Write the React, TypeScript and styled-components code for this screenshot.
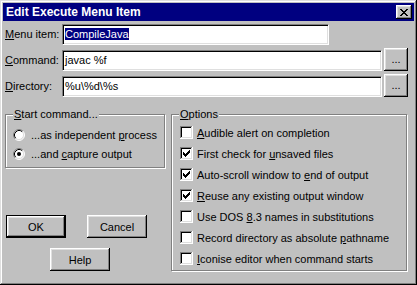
import styled, { createGlobalStyle } from "styled-components";

const GlobalStyle = createGlobalStyle`
  html, body {
    margin: 0;
    padding: 0;
    background: #c0c0c0;
  }

  body {
    font-family: "Liberation Sans", Arial, sans-serif;
    font-size: 11px;
    color: #000;
  }
`;

const CHECK_COLUMNS = [
  [3, 5],
  [4, 6],
  [5, 7],
  [6, 6],
  [7, 5],
  [8, 4],
  [9, 3],
];

const CLOSE_PIXELS = [
  [0, 0, 2], [6, 0, 2],
  [1, 1, 2], [5, 1, 2],
  [2, 2, 4],
  [3, 3, 2],
  [2, 4, 4],
  [1, 5, 2], [5, 5, 2],
  [0, 6, 2], [6, 6, 2],
];

const CloseGlyph = () => (
  <svg width="8" height="7" viewBox="0 0 8 7" shapeRendering="crispEdges">
    {CLOSE_PIXELS.map(([x, y, w]) => (
      <rect key={`${x}-${y}`} x={x} y={y} width={w} height={1} fill="#000" />
    ))}
  </svg>
);

const CheckBox = ({ checked }: { checked?: boolean }) => (
  <svg width="13" height="13" viewBox="0 0 13 13" shapeRendering="crispEdges">
    <rect x="0" y="0" width="13" height="13" fill="#fff" />
    <rect x="0" y="0" width="12" height="1" fill="#808080" />
    <rect x="0" y="0" width="1" height="12" fill="#808080" />
    <rect x="1" y="1" width="10" height="1" fill="#000" />
    <rect x="1" y="1" width="1" height="10" fill="#000" />
    <rect x="1" y="11" width="11" height="1" fill="#dfdfdf" />
    <rect x="11" y="1" width="1" height="11" fill="#dfdfdf" />
    {checked &&
      CHECK_COLUMNS.map(([x, y]) => <rect key={x} x={x} y={y} width={1} height={3} fill="#000" />)}
  </svg>
);

const Radio = ({ checked }: { checked?: boolean }) => (
  <svg width="12" height="12" viewBox="0 0 12 12">
    <circle cx="6" cy="6" r="5" fill="#fff" />
    <path d="M2.11 9.89 A5.5 5.5 0 0 1 9.89 2.11" fill="none" stroke="#808080" />
    <path d="M9.89 2.11 A5.5 5.5 0 0 1 2.11 9.89" fill="none" stroke="#fff" />
    <path d="M2.82 9.18 A4.5 4.5 0 0 1 9.18 2.82" fill="none" stroke="#000" />
    <path d="M9.18 2.82 A4.5 4.5 0 0 1 2.82 9.18" fill="none" stroke="#dfdfdf" />
    {checked && <circle cx="6" cy="6" r="2" fill="#000" />}
  </svg>
);

const App = () => {
  return (
    <>
      <GlobalStyle />
      <Window>
        <TitleBar>
          <span>Edit Execute Menu Item</span>
          <CloseButton aria-label="Close">
            <CloseGlyph />
          </CloseButton>
        </TitleBar>

        <Body>
          <FieldRows>
            <FieldRow>
              <FieldLabel>
                <u>M</u>enu item:
              </FieldLabel>
              <EditBox $width={267}>
                <Selected>CompileJava</Selected>
              </EditBox>
            </FieldRow>
            <FieldRow $tall>
              <FieldLabel>
                <u>C</u>ommand:
              </FieldLabel>
              <EditBox $width={320}>javac %f</EditBox>
              <BrowseButton>...</BrowseButton>
            </FieldRow>
            <FieldRow $tall>
              <FieldLabel>
                <u>D</u>irectory:
              </FieldLabel>
              <EditBox $width={320}>%u\%d\%s</EditBox>
              <BrowseButton>...</BrowseButton>
            </FieldRow>
          </FieldRows>

          <Lower>
            <LeftColumn>
              <GroupBox $width={160} $height={54}>
                <GroupLabel>
                  <u>S</u>tart command...
                </GroupLabel>
                <RadioList>
                  <OptionRow $height={19} $gap={6}>
                    <Radio />
                    <span>
                      ...as independent <u>p</u>rocess
                    </span>
                  </OptionRow>
                  <OptionRow $height={19} $gap={6}>
                    <Radio checked />
                    <span>
                      ...and <u>c</u>apture output
                    </span>
                  </OptionRow>
                </RadioList>
              </GroupBox>

              <ButtonRow>
                <PushButton $default>OK</PushButton>
                <PushButton>Cancel</PushButton>
              </ButtonRow>
              <HelpRow>
                <PushButton>Help</PushButton>
              </HelpRow>
            </LeftColumn>

            <GroupBox $width={236} $height={157}>
              <GroupLabel>
                <u>O</u>ptions
              </GroupLabel>
              <CheckList>
                <OptionRow $height={21} $gap={4}>
                  <CheckBox />
                  <span>
                    <u>A</u>udible alert on completion
                  </span>
                </OptionRow>
                <OptionRow $height={21} $gap={4}>
                  <CheckBox checked />
                  <span>
                    First check for <u>u</u>nsaved files
                  </span>
                </OptionRow>
                <OptionRow $height={21} $gap={4}>
                  <CheckBox checked />
                  <span>
                    Auto-scroll window to <u>e</u>nd of output
                  </span>
                </OptionRow>
                <OptionRow $height={21} $gap={4}>
                  <CheckBox checked />
                  <span>
                    <u>R</u>euse any existing output window
                  </span>
                </OptionRow>
                <OptionRow $height={21} $gap={4}>
                  <CheckBox />
                  <span>
                    Use DOS <u>8</u>.3 names in substitutions
                  </span>
                </OptionRow>
                <OptionRow $height={21} $gap={4}>
                  <CheckBox />
                  <span>
                    Record directory as absolute <u>p</u>athname
                  </span>
                </OptionRow>
                <OptionRow $height={21} $gap={4}>
                  <CheckBox />
                  <span>
                    <u>I</u>conise editor when command starts
                  </span>
                </OptionRow>
              </CheckList>
            </GroupBox>
          </Lower>
        </Body>
      </Window>
    </>
  );
};

const raised = `
  box-shadow: inset -1px -1px #000, inset 1px 1px #fff, inset -2px -2px #808080,
    inset 2px 2px #dfdfdf;
`;

const Window = styled.div`
  width: 417px;
  height: 285px;
  box-sizing: border-box;
  padding: 3px;
  background: #c0c0c0;
  box-shadow: inset -1px -1px #000, inset 1px 1px #dfdfdf, inset -2px -2px #808080,
    inset 2px 2px #fff;
  display: flex;
  flex-direction: column;
`;

const TitleBar = styled.div`
  height: 18px;
  flex-shrink: 0;
  box-sizing: border-box;
  padding: 0 2px 0 3px;
  background: #000080;
  color: #fff;
  font-size: 12px;
  font-weight: 700;
  display: flex;
  align-items: center;
  justify-content: space-between;
`;

const CloseButton = styled.button`
  width: 16px;
  height: 14px;
  padding: 0;
  border: none;
  background: #c0c0c0;
  ${raised}
  display: flex;
  align-items: center;
  justify-content: center;
`;

const Body = styled.div`
  flex: 1;
  display: flex;
  flex-direction: column;
  padding: 3px 0 0 2px;
`;

const FieldRows = styled.div`
  display: flex;
  flex-direction: column;
  gap: 3px;
`;

const FieldRow = styled.div<{ $tall?: boolean }>`
  height: ${(p) => (p.$tall ? 23 : 21)}px;
  display: flex;
  align-items: flex-end;
`;

const FieldLabel = styled.div`
  width: 57px;
  line-height: 21px;
  white-space: nowrap;
`;

const EditBox = styled.div<{ $width: number }>`
  width: ${(p) => p.$width}px;
  height: 21px;
  box-sizing: border-box;
  padding: 0 1px 0 2px;
  background: #fff;
  border: 1px solid;
  border-color: #808080 #fff #fff #808080;
  box-shadow: inset 1px 1px #000, inset -1px -1px #dfdfdf;
  line-height: 19px;
  white-space: nowrap;
`;

const Selected = styled.span`
  background: #000080;
  color: #fff;
`;

const BrowseButton = styled.button`
  width: 24px;
  height: 23px;
  margin-left: 2px;
  padding: 0 0 2px;
  border: none;
  background: #c0c0c0;
  ${raised}
  font: inherit;
  color: #000;
`;

const Lower = styled.div`
  margin-top: 17px;
  display: flex;
  gap: 6px;
  align-items: flex-start;
`;

const LeftColumn = styled.div`
  width: 160px;
  display: flex;
  flex-direction: column;
`;

const GroupBox = styled.div<{ $width: number; $height: number }>`
  position: relative;
  width: ${(p) => p.$width}px;
  height: ${(p) => p.$height}px;
  box-sizing: border-box;
  border: 1px solid #808080;
  box-shadow: inset 1px 1px #fff, 1px 1px #fff;
`;

const GroupLabel = styled.span`
  position: absolute;
  top: -7px;
  left: 7px;
  padding: 0 1px;
  line-height: 13px;
  background: #c0c0c0;
  white-space: nowrap;
`;

const RadioList = styled.div`
  padding: 10px 0 0 7px;
  display: flex;
  flex-direction: column;
`;

const CheckList = styled.div`
  padding: 7px 0 0 8px;
  display: flex;
  flex-direction: column;
`;

const OptionRow = styled.div<{ $height: number; $gap: number }>`
  height: ${(p) => p.$height}px;
  display: flex;
  align-items: center;
  gap: ${(p) => p.$gap}px;
  white-space: nowrap;

  svg {
    flex-shrink: 0;
  }
`;

const ButtonRow = styled.div`
  margin-top: 47px;
  padding-left: 1px;
  display: flex;
  gap: 21px;
`;

const HelpRow = styled.div`
  margin-top: 10px;
  padding-left: 45px;
  display: flex;
`;

const PushButton = styled.button<{ $default?: boolean }>`
  width: 60px;
  height: 23px;
  padding: 0;
  box-sizing: border-box;
  background: #c0c0c0;
  border: ${(p) => (p.$default ? "1px solid #000" : "none")};
  ${raised}
  font: inherit;
  color: #000;
`;

export default App;
